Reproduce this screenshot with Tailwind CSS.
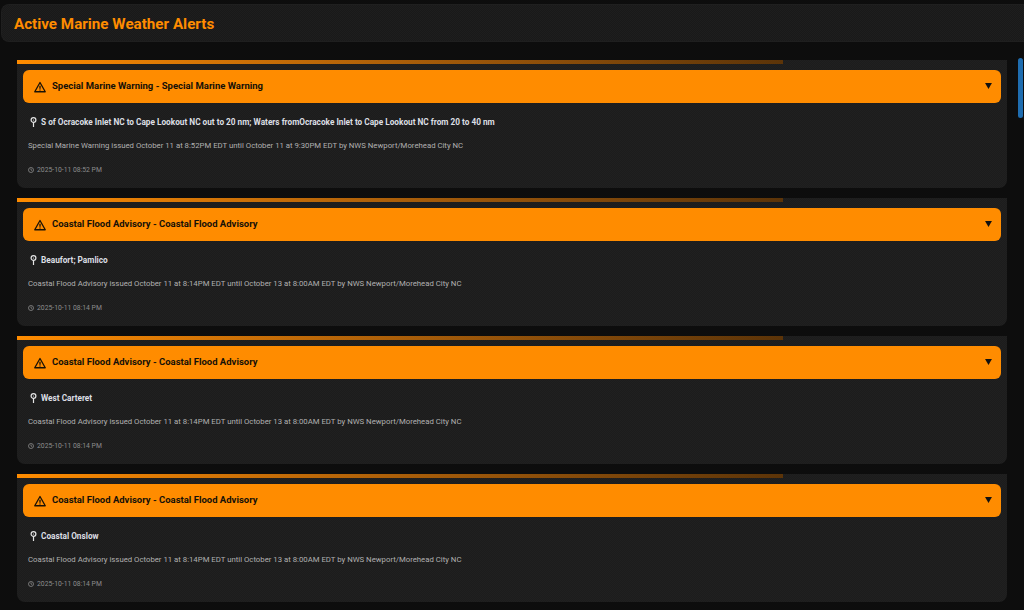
<!DOCTYPE html>
<html lang="en">
<head>
    <meta charset="UTF-8">
    <meta name="viewport" content="width=device-width, initial-scale=1.0">
    <title>Active Marine Weather Alerts</title>
    <script src="https://cdn.jsdelivr.net/npm/@tailwindcss/browser@4"></script>
</head>
<body class="bg-[#0d0d0d] font-['Roboto',sans-serif] h-[610px] overflow-hidden relative">
    <header class="mt-[4px] ml-px h-[38px] bg-[repeating-conic-gradient(#1e1e1e_0_25%,#191919_0_50%)] bg-[length:2px_2px] border border-r-0 border-[#1f1f1f] rounded-l-lg flex items-center pl-[12px] pt-[3px]">
        <h1 class="text-[15.2px] leading-none font-bold text-[#ff8c00]">Active Marine Weather Alerts</h1>
    </header>

    <main class="mt-[18px] ml-[17px] w-[990px] flex flex-col gap-[10px]">
        <!-- alert 1 -->
        <section class="h-[128px] bg-[repeating-conic-gradient(#202020_0_25%,#1c1c1c_0_50%)] bg-[length:2px_2px] rounded-b-lg">
            <div class="h-[4px] w-[766px] bg-gradient-to-r from-[#ff8c00] to-[#5c3408]"></div>
            <div class="mt-[6px] mx-[6px] h-[33px] bg-[#ff8c00] rounded-md flex items-center pl-[11px] pr-[9px]">
                <svg class="w-[12px] h-[12px] mr-[6px]" viewBox="0 0 24 24" fill="none" stroke="#1a1206" stroke-width="2.6" stroke-linejoin="round"><path d="M12 3 L22.5 21.5 H1.5 Z"/><path d="M12 9.5v6M12 17v2"/></svg>
                <span class="text-[9.5px] font-bold text-[#141008]">Special Marine Warning - Special Marine Warning</span>
                <svg class="ml-auto w-[7px] h-[6px] mb-[2px]" viewBox="0 0 8 7"><path d="M0 0H8L4 7Z" fill="#111"/></svg>
            </div>
            <div class="mt-[13px] ml-[13px] flex items-center h-[12px]">
                <svg class="w-[7px] h-[10px] mr-[4px]" viewBox="0 0 7 10" fill="none" stroke="#e4e4e4" stroke-width="1.2"><circle cx="3.5" cy="3" r="2.4"/><circle cx="3.5" cy="3" r="0.6" fill="#e4e4e4" stroke="none"/><path d="M3.5 5.4V10"/></svg>
                <span class="text-[8.25px] font-bold text-[#dcdfe4]">S of Ocracoke Inlet NC to Cape Lookout NC out to 20 nm; Waters fromOcracoke Inlet to Cape Lookout NC from 20 to 40 nm</span>
            </div>
            <p class="mt-[12px] ml-[11px] h-[12px] leading-[12px] text-[7.77px] text-[#b0b0b0]">Special Marine Warning issued October 11 at 8:52PM EDT until October 11 at 9:30PM EDT by NWS Newport/Morehead City NC</p>
            <div class="mt-[12px] ml-[11px] flex items-center h-[12px]">
                <svg class="w-[6px] h-[6px] mr-[3px]" viewBox="0 0 6 6" fill="none" stroke="#8a8a8a" stroke-width="0.8"><circle cx="3" cy="3" r="2.5"/><path d="M3 1.5V3L4.2 3.6"/></svg>
                <span class="text-[6.8px] text-[#8c8c8c]">2025-10-11 08:52 PM</span>
            </div>
        </section>

        <!-- alert 2 -->
        <section class="h-[128px] bg-[repeating-conic-gradient(#202020_0_25%,#1c1c1c_0_50%)] bg-[length:2px_2px] rounded-b-lg">
            <div class="h-[4px] w-[766px] bg-gradient-to-r from-[#ff8c00] to-[#5c3408]"></div>
            <div class="mt-[6px] mx-[6px] h-[33px] bg-[#ff8c00] rounded-md flex items-center pl-[11px] pr-[9px]">
                <svg class="w-[12px] h-[12px] mr-[6px]" viewBox="0 0 24 24" fill="none" stroke="#1a1206" stroke-width="2.6" stroke-linejoin="round"><path d="M12 3 L22.5 21.5 H1.5 Z"/><path d="M12 9.5v6M12 17v2"/></svg>
                <span class="text-[9.5px] font-bold text-[#141008]">Coastal Flood Advisory - Coastal Flood Advisory</span>
                <svg class="ml-auto w-[7px] h-[6px] mb-[2px]" viewBox="0 0 8 7"><path d="M0 0H8L4 7Z" fill="#111"/></svg>
            </div>
            <div class="mt-[13px] ml-[13px] flex items-center h-[12px]">
                <svg class="w-[7px] h-[10px] mr-[4px]" viewBox="0 0 7 10" fill="none" stroke="#e4e4e4" stroke-width="1.2"><circle cx="3.5" cy="3" r="2.4"/><circle cx="3.5" cy="3" r="0.6" fill="#e4e4e4" stroke="none"/><path d="M3.5 5.4V10"/></svg>
                <span class="text-[8.25px] font-bold text-[#dcdfe4]">Beaufort; Pamlico</span>
            </div>
            <p class="mt-[12px] ml-[11px] h-[12px] leading-[12px] text-[7.77px] text-[#b0b0b0]">Coastal Flood Advisory issued October 11 at 8:14PM EDT until October 13 at 8:00AM EDT by NWS Newport/Morehead City NC</p>
            <div class="mt-[12px] ml-[11px] flex items-center h-[12px]">
                <svg class="w-[6px] h-[6px] mr-[3px]" viewBox="0 0 6 6" fill="none" stroke="#8a8a8a" stroke-width="0.8"><circle cx="3" cy="3" r="2.5"/><path d="M3 1.5V3L4.2 3.6"/></svg>
                <span class="text-[6.8px] text-[#8c8c8c]">2025-10-11 08:14 PM</span>
            </div>
        </section>

        <!-- alert 3 -->
        <section class="h-[128px] bg-[repeating-conic-gradient(#202020_0_25%,#1c1c1c_0_50%)] bg-[length:2px_2px] rounded-b-lg">
            <div class="h-[4px] w-[766px] bg-gradient-to-r from-[#ff8c00] to-[#5c3408]"></div>
            <div class="mt-[6px] mx-[6px] h-[33px] bg-[#ff8c00] rounded-md flex items-center pl-[11px] pr-[9px]">
                <svg class="w-[12px] h-[12px] mr-[6px]" viewBox="0 0 24 24" fill="none" stroke="#1a1206" stroke-width="2.6" stroke-linejoin="round"><path d="M12 3 L22.5 21.5 H1.5 Z"/><path d="M12 9.5v6M12 17v2"/></svg>
                <span class="text-[9.5px] font-bold text-[#141008]">Coastal Flood Advisory - Coastal Flood Advisory</span>
                <svg class="ml-auto w-[7px] h-[6px] mb-[2px]" viewBox="0 0 8 7"><path d="M0 0H8L4 7Z" fill="#111"/></svg>
            </div>
            <div class="mt-[13px] ml-[13px] flex items-center h-[12px]">
                <svg class="w-[7px] h-[10px] mr-[4px]" viewBox="0 0 7 10" fill="none" stroke="#e4e4e4" stroke-width="1.2"><circle cx="3.5" cy="3" r="2.4"/><circle cx="3.5" cy="3" r="0.6" fill="#e4e4e4" stroke="none"/><path d="M3.5 5.4V10"/></svg>
                <span class="text-[8.25px] font-bold text-[#dcdfe4]">West Carteret</span>
            </div>
            <p class="mt-[12px] ml-[11px] h-[12px] leading-[12px] text-[7.77px] text-[#b0b0b0]">Coastal Flood Advisory issued October 11 at 8:14PM EDT until October 13 at 8:00AM EDT by NWS Newport/Morehead City NC</p>
            <div class="mt-[12px] ml-[11px] flex items-center h-[12px]">
                <svg class="w-[6px] h-[6px] mr-[3px]" viewBox="0 0 6 6" fill="none" stroke="#8a8a8a" stroke-width="0.8"><circle cx="3" cy="3" r="2.5"/><path d="M3 1.5V3L4.2 3.6"/></svg>
                <span class="text-[6.8px] text-[#8c8c8c]">2025-10-11 08:14 PM</span>
            </div>
        </section>

        <!-- alert 4 -->
        <section class="h-[128px] bg-[repeating-conic-gradient(#202020_0_25%,#1c1c1c_0_50%)] bg-[length:2px_2px] rounded-b-lg">
            <div class="h-[4px] w-[766px] bg-gradient-to-r from-[#ff8c00] to-[#5c3408]"></div>
            <div class="mt-[6px] mx-[6px] h-[33px] bg-[#ff8c00] rounded-md flex items-center pl-[11px] pr-[9px]">
                <svg class="w-[12px] h-[12px] mr-[6px]" viewBox="0 0 24 24" fill="none" stroke="#1a1206" stroke-width="2.6" stroke-linejoin="round"><path d="M12 3 L22.5 21.5 H1.5 Z"/><path d="M12 9.5v6M12 17v2"/></svg>
                <span class="text-[9.5px] font-bold text-[#141008]">Coastal Flood Advisory - Coastal Flood Advisory</span>
                <svg class="ml-auto w-[7px] h-[6px] mb-[2px]" viewBox="0 0 8 7"><path d="M0 0H8L4 7Z" fill="#111"/></svg>
            </div>
            <div class="mt-[13px] ml-[13px] flex items-center h-[12px]">
                <svg class="w-[7px] h-[10px] mr-[4px]" viewBox="0 0 7 10" fill="none" stroke="#e4e4e4" stroke-width="1.2"><circle cx="3.5" cy="3" r="2.4"/><circle cx="3.5" cy="3" r="0.6" fill="#e4e4e4" stroke="none"/><path d="M3.5 5.4V10"/></svg>
                <span class="text-[8.25px] font-bold text-[#dcdfe4]">Coastal Onslow</span>
            </div>
            <p class="mt-[12px] ml-[11px] h-[12px] leading-[12px] text-[7.77px] text-[#b0b0b0]">Coastal Flood Advisory issued October 11 at 8:14PM EDT until October 13 at 8:00AM EDT by NWS Newport/Morehead City NC</p>
            <div class="mt-[12px] ml-[11px] flex items-center h-[12px]">
                <svg class="w-[6px] h-[6px] mr-[3px]" viewBox="0 0 6 6" fill="none" stroke="#8a8a8a" stroke-width="0.8"><circle cx="3" cy="3" r="2.5"/><path d="M3 1.5V3L4.2 3.6"/></svg>
                <span class="text-[6.8px] text-[#8c8c8c]">2025-10-11 08:14 PM</span>
            </div>
        </section>
    </main>

    <!-- scrollbar thumb -->
    <div class="absolute top-[58px] left-[1018px] w-[5px] h-[60px] rounded-sm bg-[#1f6db0]"></div>
</body>
</html>
